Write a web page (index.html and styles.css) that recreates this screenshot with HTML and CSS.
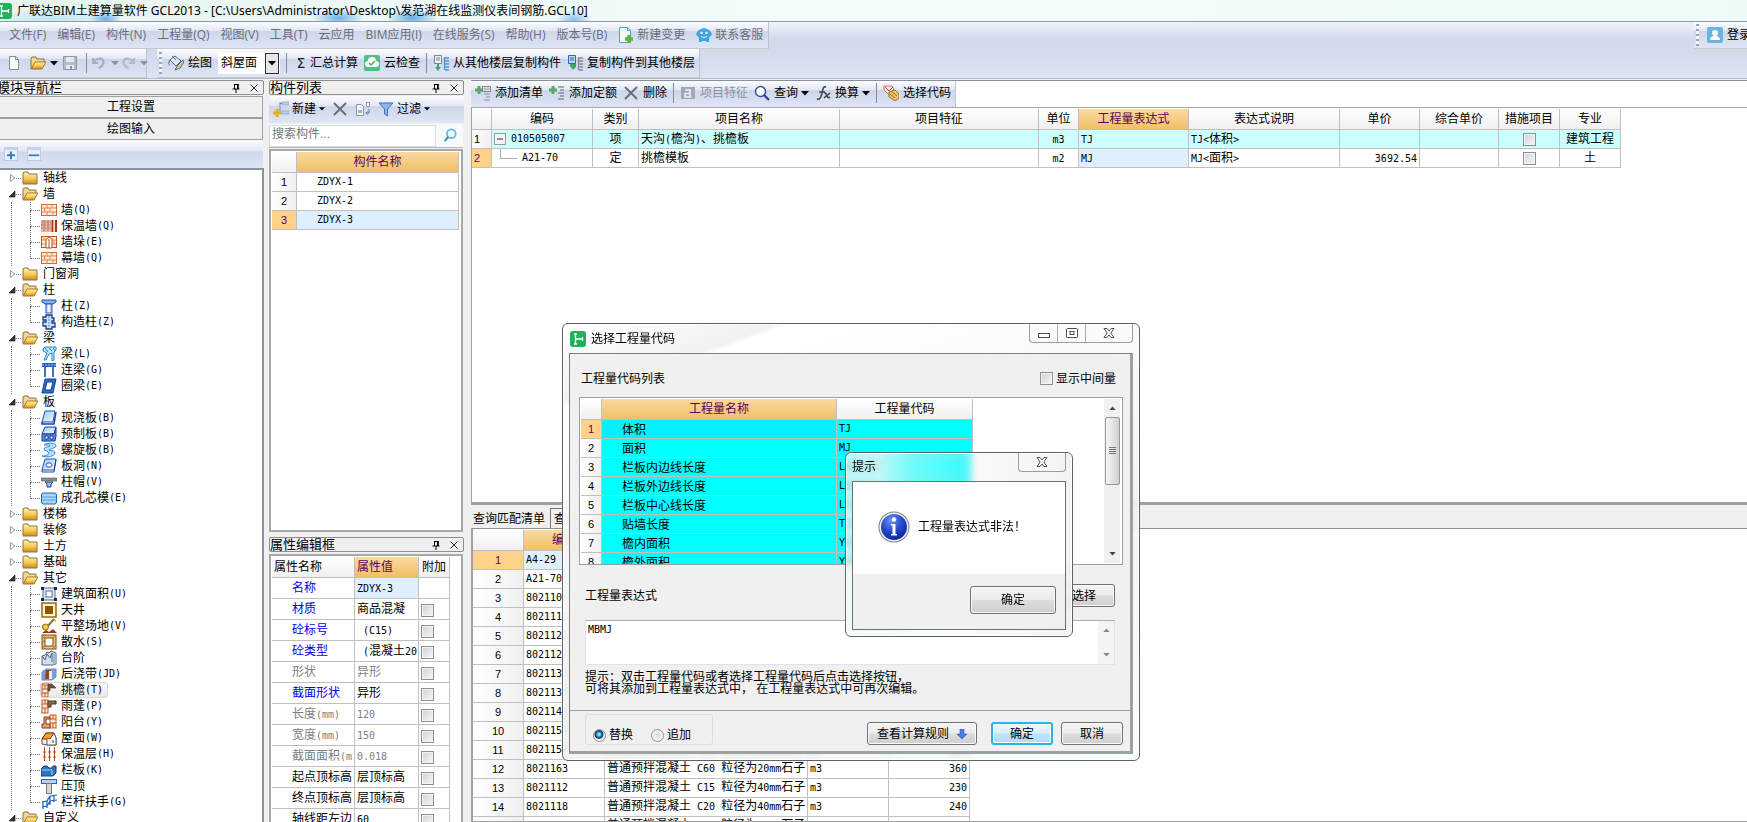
FILE: index.html
```html
<!DOCTYPE html>
<html lang="zh-CN">
<head>
<meta charset="utf-8">
<title>广联达BIM土建算量软件 GCL2013</title>
<link rel="stylesheet" href="styles.css">
</head>
<body>
<svg class="sprite" aria-hidden="true">
<defs>
<linearGradient id="gold" x1="0" y1="0" x2="0" y2="1"><stop offset="0" stop-color="#fff3b0"/><stop offset=".5" stop-color="#f6cf5e"/><stop offset="1" stop-color="#d08a18"/></linearGradient>
<linearGradient id="sky" x1="0" y1="0" x2="1" y2="1"><stop offset="0" stop-color="#9fc8f5"/><stop offset="1" stop-color="#f4faff"/></linearGradient>
<linearGradient id="steel" x1="0" y1="0" x2="1" y2="0"><stop offset="0" stop-color="#9db8e6"/><stop offset=".5" stop-color="#fff"/><stop offset="1" stop-color="#7d9fdd"/></linearGradient>
<radialGradient id="orb" cx=".4" cy=".25" r=".8"><stop offset="0" stop-color="#6f93ee"/><stop offset=".5" stop-color="#2a4bd0"/><stop offset="1" stop-color="#0a1f9c"/></radialGradient>
</defs>
<symbol id="app" viewBox="0 0 16 16"><rect width="16" height="16" rx="3" fill="#21b15c"/><path d="M4 3h3M5.500 3v10M4 13h3M5.500 8h7M12.500 6v4" stroke="#fff" stroke-width="1.300" fill="none"/></symbol>
<symbol id="folder" viewBox="0 0 16 14"><path d="M1 3V2l1-1h4l1 2h8v10H1z" fill="url(#gold)" stroke="#8a7346"/></symbol>
<symbol id="folder-open" viewBox="0 0 16 14"><path d="M1 13V2l1-1h4l1 2h7v3" fill="#f3d88a" stroke="#8a7346"/><path d="M1 13l4-7h11l-4 7z" fill="url(#gold)" stroke="#a37b2c"/></symbol>
<symbol id="shut" viewBox="0 0 8 10"><path d="M2.500 1.500v7L7 5z" fill="#fff" stroke="#999"/></symbol>
<symbol id="unfold" viewBox="0 0 8 10"><path d="M7 2v6H1z" fill="#333" stroke="#111" stroke-width=".6"/></symbol>
<symbol id="wall" viewBox="0 0 16 14"><rect x=".5" y="1.500" width="15" height="11" fill="#fdebd9" stroke="#cc6f3c"/><path d="M1 5h14M1 9h14M6 1v4M11 1v4M3.500 5v4M9 5v4M6 9v4M12 9v4" stroke="#d98a52" fill="none"/></symbol>
<symbol id="wall-ins" viewBox="0 0 16 14"><rect y="1" width="10" height="12" fill="#e9b3a4"/><path d="M0 3h10M0 6h10M0 9h10M3 1v12M7 1v12" stroke="#b86a5b" stroke-dasharray="2 1"/><path d="M11.500 1v12M15 1v12" stroke="#a8321a" stroke-width="2"/><path d="M13 1v12" stroke="#f3c27c"/></symbol>
<symbol id="pier" viewBox="0 0 16 14"><rect x=".5" y="1.500" width="15" height="11" fill="#fdebd9" stroke="#c0561f"/><path d="M1 5h4M1 9h4M11 5h4M11 9h4M3 1v4M13 5v4" stroke="#d98a52"/><path d="M5 13V4l3-2 3 2v9z" fill="#fff" stroke="#b5501e"/><path d="M8 4v9" stroke="#b5501e"/></symbol>
<symbol id="column" viewBox="0 0 16 16"><path d="M1 2h14v2l-3 2H4L1 4z" fill="#7fb1ee" stroke="#1d4fb0"/><rect x="5" y="6" width="6" height="9" fill="url(#steel)" stroke="#2a5cc0"/></symbol>
<symbol id="ccolumn" viewBox="0 0 16 16"><path d="M5 1h6v3h2v3h-2v2h3v4h-3v2H5v-3H2V8h3V6H2V3h3z" fill="#cfe0f7" stroke="#163f8e" stroke-width="1.300"/><path d="M8 2v12" stroke="#5d8bd0" stroke-dasharray="2 1"/></symbol>
<symbol id="beam" viewBox="0 0 16 16"><path d="M2 3l2-2h11v3L13 6v8l-2 1V7l-3 1-3 6H3l3-7-4-2z" fill="#bfe2fb" stroke="#2b86d3"/><path d="M4 2l3 4M8 2l3 3M12 2l2 3" stroke="#2b86d3"/></symbol>
<symbol id="lbeam" viewBox="0 0 16 16"><rect x="1" y="1" width="14" height="4" fill="#2a5fb8"/><path d="M1 3h14" stroke="#9cc2f0" stroke-dasharray="2 1"/><path d="M4 5v10M12 5v10" stroke="#3d73c9" stroke-width="2"/></symbol>
<symbol id="rbeam" viewBox="0 0 16 16"><path d="M4 1h11l-3 14H1z" fill="#2f6fd0" stroke="#123c94"/><path d="M6 4h6l-2 8H4z" fill="#fff" stroke="#123c94"/></symbol>
<symbol id="slab" viewBox="0 0 16 16"><path d="M4 1h10l-2 11H1z" fill="url(#sky)" stroke="#1d55b5"/><path d="M1 12v2h12l2-12" fill="none" stroke="#1546a0" stroke-width="1.500"/></symbol>
<symbol id="preslab" viewBox="0 0 16 16"><path d="M4 1h11l-2 7H1z" fill="url(#sky)" stroke="#1d3f9c"/><path d="M1 8h12l2-6v8l-1 5H1z" fill="#5a8ce0" stroke="#163a94"/><path d="M4 10h3v3H4zM9 10h3v3H9z" fill="#fff" stroke="#163a94"/></symbol>
<symbol id="spiral" viewBox="0 0 16 16"><path d="M3 3C8 0 15 1 15 4c0 2-7 3-7 4s6 0 6 3-8 5-13 3c3 0 7-1 7-3S3 9 3 7s5-2 6-3-3-1-6-1z" fill="#b9e0fb" stroke="#2c8ad6"/></symbol>
<symbol id="hole" viewBox="0 0 16 16"><path d="M4 1h11l-2 11H1z" fill="url(#sky)" stroke="#1d55b5"/><path d="M1 12v2h12l2-12" fill="none" stroke="#1546a0"/><ellipse cx="8" cy="7" rx="3" ry="2.200" fill="#fff" stroke="#1d55b5"/></symbol>
<symbol id="cap" viewBox="0 0 16 16"><rect y="4" width="16" height="3" fill="#8d8d8d" stroke="#555" stroke-width=".6"/><path d="M4 8h8l-2 2v3H6v-3z" fill="#9fbdf0" stroke="#163a94"/></symbol>
<symbol id="core" viewBox="0 0 16 16"><rect x=".5" y="3" width="15" height="11" rx="2" fill="#a7d3f5" stroke="#2a62a8"/><path d="M1 7h14M1 10h14" stroke="#5fa4dc"/></symbol>
<symbol id="area" viewBox="0 0 16 16"><rect x="2" y="2" width="12" height="12" fill="#dbe4f2" stroke="#5a6f94"/><rect x="5" y="5" width="6" height="6" fill="#fff" stroke="#5a6f94"/><path d="M0 1h3v3H0zM13 1h3v3h-3zM0 12h3v3H0zM13 12h3v3h-3z" fill="#152a55"/></symbol>
<symbol id="well" viewBox="0 0 16 16"><rect x="1" y="1" width="14" height="14" fill="#fff3d2" stroke="#9a6a11" stroke-width="1.500"/><rect x="4" y="4" width="8" height="8" fill="#8b5a08"/></symbol>
<symbol id="shovel" viewBox="0 0 16 16"><path d="M13 1L6 9" stroke="#8a7a35" stroke-width="2"/><path d="M12 1l3 2" stroke="#8a7a35"/><circle cx="4.500" cy="9" r="3" fill="#f6cf3a" stroke="#8a6a12"/><path d="M1 15l4-3 3 2 4-3 4 4z" fill="#8a3b18"/></symbol>
<symbol id="apron" viewBox="0 0 16 16"><rect x="1" y="1" width="14" height="14" fill="#edc37c" stroke="#7d4c13"/><path d="M1 5l4-4M1 9l3-3M12 4l3-3M1 14l4-3M11 15l4-4" stroke="#a86f27"/><rect x="4" y="4" width="8" height="8" fill="#fff" stroke="#7d4c13"/></symbol>
<symbol id="steps" viewBox="0 0 16 16"><path d="M1 6l3-1 2-3 2 1 2-2 5 2v11l-3 1H1z" fill="#d3deea" stroke="#4b6685"/><path d="M1 6l3 4 2-6 3 4 2-5v9" fill="none" stroke="#4b6685"/><path d="M12 4l3-1v11l-3 1z" fill="#9bb4d0"/></symbol>
<symbol id="strip" viewBox="0 0 16 16"><path d="M1 6l4-3h10v8l-4 3H1z" fill="#7b9cd6" stroke="#6f8bbd"/><path d="M5 4h5v9H4z" fill="#9a4319"/><path d="M8 5h3v8H8z" fill="#e7eefb"/></symbol>
<symbol id="eave" viewBox="0 0 16 16"><rect x="1" y="3" width="6" height="12" fill="#fdebd9" stroke="#c0561f"/><path d="M1 7h6M1 11h6M4 3v4M4 11v4" stroke="#c0561f"/><path d="M7 2h4l4 4H9v3H7z" fill="#6f5138" stroke="#4a321e" stroke-width=".6"/><path d="M1 3l1-2h6" stroke="#c0561f" fill="none"/></symbol>
<symbol id="canopy" viewBox="0 0 16 16"><rect x="1" y="2" width="6" height="13" fill="#fdebd9" stroke="#c0561f"/><path d="M1 6h6M1 10h6M4 2v4M4 10v5" stroke="#c0561f"/><path d="M7 3h8v3h-5v3H7z" fill="#8c6b4c" stroke="#4a321e"/></symbol>
<symbol id="balcony" viewBox="0 0 16 16"><rect x="9" y="1" width="6" height="13" fill="#fdebd9" stroke="#c0561f"/><path d="M9 5h6M9 9h6M12 1v4M12 9v5" stroke="#c0561f"/><path d="M3 3h6v2H5v5h4v4H1v-4h2z" fill="#dca277" stroke="#8c3f16"/></symbol>
<symbol id="roof" viewBox="0 0 16 16"><path d="M1 9l4-6h8l2 5v7H6L1 14z" fill="#efefef" stroke="#555"/><path d="M1 9l4-6h8l-4 6z" fill="#f59e22" stroke="#70400c"/><path d="M9 9l4-6 2 5v7H6v-6" fill="#fff" stroke="#555"/><path d="M12 10v3" stroke="#333"/></symbol>
<symbol id="insul" viewBox="0 0 16 16"><path d="M3.500 1v14M8.500 1v14M13.500 1v14M2 6h3M2 11h3M7 6h3M7 11h3M12 6h3M12 11h3" stroke="#c2481b" fill="none"/></symbol>
<symbol id="board" viewBox="0 0 16 16"><path d="M0 7l3-3h3l2 2h3l1-2h3v7l-3 3H0z" fill="#2d75c0" stroke="#12407c"/><path d="M1 8h10v5" stroke="#a9d1f4" fill="none"/></symbol>
<symbol id="coping" viewBox="0 0 16 16"><rect x=".5" y="1.500" width="15" height="4" fill="#b3d4f6" stroke="#2a62c0"/><rect x="5.500" y="5.500" width="5" height="10" fill="#d7d7d7" stroke="#777"/></symbol>
<symbol id="rail" viewBox="0 0 16 16"><path d="M1 8l5-1 3-5 7-1M1 13l5-1 3-5 7-1M2 7v8M6 6v8M9 2v9M13 1v7" stroke="#1f62bf" stroke-width="1.200" fill="none"/></symbol>
<symbol id="new" viewBox="0 0 16 16"><path d="M3.500 1.500h6l3 3v10h-9z" fill="#fdfeff" stroke="#7c8ba8"/><path d="M9.500 1.500v3h3" fill="none" stroke="#7c8ba8"/></symbol>
<symbol id="save" viewBox="0 0 16 16"><path d="M1.500 1.500h13v13h-13z" fill="#b5bac6" stroke="#9298a8"/><path d="M4 2h8v5H4zM4 10h8v4H4z" fill="#e6e9f1"/><path d="M9 11v3" stroke="#9298a8" stroke-width="2"/></symbol>
<symbol id="undo" viewBox="0 0 16 16"><path d="M2 3v5h5M2.500 7.500C5 3 12 2 12.500 7c0 3-2 5-5 6" fill="none" stroke="#a9aec0" stroke-width="2.200"/></symbol>
<symbol id="redo" viewBox="0 0 16 16"><path d="M14 3v5H9M13.500 7.500C11 3 4 2 3.500 7c0 3 2 5 5 6" fill="none" stroke="#b4b9ca" stroke-width="2.200"/></symbol>
<symbol id="caret" viewBox="0 0 8 5"><path d="M0 0h8L4 4.500z" fill="currentColor"/></symbol>
<symbol id="paint" viewBox="0 0 16 16"><path d="M2 5l5-4 6 5-5 5z" fill="#dfe8f6" stroke="#4f678f"/><path d="M2 5c-2 3-1 5 0 5M4 1l4 4" stroke="#4f678f" fill="none"/><path d="M15 5l-6 6-2 4 5-2 4-6z" fill="#f0c868" stroke="#3c6fb4"/></symbol>
<symbol id="cloud" viewBox="0 0 16 16"><rect width="16" height="16" rx="2" fill="#4fbf85"/><path d="M4 12a3 3 0 010-6 4 4 0 018 0 3 3 0 010 6z" fill="#fff"/><path d="M5 8l2 2 4-4" stroke="#35b26c" stroke-width="1.500" fill="none"/></symbol>
<symbol id="copyfrom" viewBox="0 0 16 16"><path d="M1.500.5h7v8h-7z" fill="#eef1f6" stroke="#7b8594"/><path d="M3 3h4M3 5h4" stroke="#7b8594"/><path d="M4 9v3H2l3 4 3-4H6V9z" fill="#3fa567"/><path d="M11.500 2v13M12 3h4M12 6h4M12 9h4M12 12h4M12 15h4" fill="none" stroke="#4f93d6" stroke-width="1.300"/></symbol>
<symbol id="copyto" viewBox="0 0 16 16"><path d="M1.500.5h7v8h-7z" fill="#b8d4f5" stroke="#2f66b3"/><path d="M3 3h4M3 5h4" stroke="#2f66b3"/><path d="M3 9v2l3 4 3-3V9z" fill="#3fa567"/><path d="M11.500 2v13M12 3h4M12 6h4M12 9h4M12 12h4M12 15h4" fill="none" stroke="#858c98" stroke-width="1.300"/></symbol>
<symbol id="addlist" viewBox="0 0 16 16"><path d="M4 1v8M0 5h8" stroke="#5fa566" stroke-width="3"/><rect x="7.500" y="1.500" width="8" height="5" fill="#eef1f6" stroke="#808895"/><path d="M8 4h7M10 2v4M13 2v4" stroke="#9aa1ad" stroke-width=".8"/><path d="M9 9h6M11 12h4M9 15h6" stroke="#8a909b"/></symbol>
<symbol id="addquota" viewBox="0 0 16 16"><path d="M4 1v8M0 5h8" stroke="#5fa566" stroke-width="3"/><path d="M9 2h6M11 5h4M9 8h6M11 11h4M9 14h6" stroke="#60656e"/></symbol>
<symbol id="del" viewBox="0 0 16 16"><path d="M2 2l12 12M14 2L2 14" stroke="#6b6b70" stroke-width="1.800"/></symbol>
<symbol id="feat" viewBox="0 0 16 16"><rect x="1" y="2" width="14" height="12" fill="#a2a8b5"/><path d="M5 5h5v7H5V8.500h5M10 12h1.500" fill="none" stroke="#eef0f5" stroke-width="1.600"/></symbol>
<symbol id="search" viewBox="0 0 16 16"><circle cx="6.500" cy="6.500" r="5" fill="#fff" stroke="#3a4fa0" stroke-width="1.500"/><path d="M10 10l5 5" stroke="#2d3d90" stroke-width="2.200"/></symbol>
<symbol id="lens" viewBox="0 0 16 16"><circle cx="9.500" cy="6.500" r="5" fill="#eff8ff" stroke="#69b5ea" stroke-width="2"/><path d="M6 10l-4 5" stroke="#3d8fd2" stroke-width="2.400"/></symbol>
<symbol id="fx" viewBox="0 0 16 16"><path d="M11 2c-3-1-3 2-4 6s-2 7-5 6M4 7h6M9 8c2-1 2 1 3 3s2 2 3 1M15 8l-6 5" stroke="#42464f" stroke-width="1.600" fill="none"/></symbol>
<symbol id="pick" viewBox="0 0 16 16"><path d="M1 1h8l2 3-5 6-5-5z" fill="#f3e3dd" stroke="#c47b67"/><path d="M2 2l4 4 4-4" stroke="#cf4935" fill="none"/><path d="M6 7l6-2 4 4v4l-4 3-6-4z" fill="#eac069" stroke="#a0752c"/><path d="M7 9l5 4M9 7l5 4" stroke="#a0752c"/></symbol>
<symbol id="newchange" viewBox="0 0 16 16"><path d="M1.500.5h8l3 3v12h-11z" fill="#f3faff" stroke="#4fa3d5"/><path d="M9.500.5v3h3" fill="none" stroke="#4fa3d5"/><path d="M11 8v8M7 12h8" stroke="#62b040" stroke-width="3.400"/></symbol>
<symbol id="robot" viewBox="0 0 16 16"><path d="M3 3l2-1 3-1 3 1 2 1 2 2 1 3-2 1-1 3v3h-2l-1-1H6l-1 1H3v-3L2 9 0 8l1-3z" fill="#3fa5e2"/><circle cx="5.500" cy="6" r="1.200" fill="#fff"/><circle cx="10.500" cy="6" r="1.200" fill="#fff"/><path d="M5 9c2 2 4 2 6 0" stroke="#fff" fill="none"/></symbol>
<symbol id="user" viewBox="0 0 16 16"><rect width="16" height="16" rx="2" fill="#6db4d9"/><circle cx="8" cy="6" r="3" fill="#fff"/><path d="M3 13c0-3 2-4 5-4s5 1 5 4z" fill="#fff"/></symbol>
<symbol id="addcomp" viewBox="0 0 16 16"><path d="M7 1v12M7 2.500h9M7 12.500h9" stroke="#6c89b4"/><path d="M9 1h7v3H9zM9 10h7v3H9z" fill="#b9cdea" stroke="#8099bd" stroke-width=".6"/><path d="M4 8v8M0 12h8" stroke="#e2b31d" stroke-width="3"/></symbol>
<symbol id="copy" viewBox="0 0 16 16"><path d="M1.500 3.500h5l2 2v9h-7z" fill="#f4f6fb" stroke="#8d94a3"/><path d="M3 9h4v3H3z" fill="#a8adb9"/><path d="M11.500 1.500h3v4h-3z" fill="#fff" stroke="#8d94a3"/><path d="M14 8v4h-3M12.500 10.500L11 12l1.500 1.500" stroke="#4b74d0" fill="none"/></symbol>
<symbol id="filter" viewBox="0 0 16 16"><path d="M1 2h14L9.500 8v7l-3-2V8z" fill="#8db5ec" stroke="#3c6fc4"/></symbol>
<symbol id="plus" viewBox="0 0 16 16"><rect x=".5" y=".5" width="15" height="15" fill="#e9f0fb" stroke="#b9c6e0"/><path d="M0 2h16" stroke="#c5d3ee" stroke-width="3"/><path d="M8 5v9M3.500 9.500h9" stroke="#2f7dbb" stroke-width="2.200"/></symbol>
<symbol id="minus" viewBox="0 0 16 16"><rect x=".5" y=".5" width="15" height="15" fill="#e9f0fb" stroke="#b9c6e0"/><path d="M0 2h16" stroke="#c5d3ee" stroke-width="3"/><path d="M2 9.500h12" stroke="#2f7dbb" stroke-width="2"/></symbol>
<symbol id="pin" viewBox="0 0 8 10"><path d="M2 1.500h4.500M2.500 1v5M5.500 1v5M6.300 1v5M.5 6h7M4 6v4" stroke="#000" fill="none"/></symbol>
<symbol id="close" viewBox="0 0 8 8"><path d="M.5.5l7 7M7.500.5l-7 7" stroke="#222"/></symbol>
<symbol id="wx" viewBox="0 0 12 10"><path d="M1 .5h3l2 2.500L8 .5h3L7.800 5 11 9.500H8L6 7 4 9.500H1L4.200 5z" fill="#fff" stroke="#4a4f5c"/></symbol>
<symbol id="wmin" viewBox="0 0 12 10"><rect x=".5" y="5.500" width="11" height="4" fill="#fff" stroke="#4a4f5c"/></symbol>
<symbol id="wmax" viewBox="0 0 12 10"><rect x=".5" y=".5" width="11" height="9" rx="1" fill="#fff" stroke="#4a4f5c"/><rect x="4" y="3.500" width="4" height="3" fill="#fff" stroke="#4a4f5c"/></symbol>
<symbol id="down" viewBox="0 0 10 10"><path d="M3 0h4v5h3L5 10 0 5h3z" fill="#4a7de0" stroke="#2a55b8" stroke-width=".6"/></symbol>
<symbol id="info" viewBox="0 0 32 32"><circle cx="16" cy="16" r="15.500" fill="#777d88"/><circle cx="16" cy="16" r="14.500" fill="#f1f3f6"/><circle cx="16" cy="16" r="13" fill="url(#orb)"/><circle cx="16" cy="8.500" r="2.200" fill="#fff"/><path d="M13 13h4.500v10H19v1.500h-6V23h1.500v-8.500H13z" fill="#fff"/></symbol>
<symbol id="box-minus" viewBox="0 0 12 12"><rect x=".5" y=".5" width="11" height="11" fill="#f2f2f2" stroke="#9a9a9a"/><path d="M3 6h6" stroke="#333"/></symbol>
</svg>

<header class="titlebar"><svg class="i16"><use href="#app"/></svg><h1>广联达BIM土建算量软件 GCL2013 - [C:\Users\Administrator\Desktop\发范湖在线监测仪表间钢筋.GCL10]</h1></header>

<div class="chrome">
<div class="menurow">
<nav class="menu bar">
<button>文件(F)</button><button>编辑(E)</button><button>构件(N)</button><button>工程量(Q)</button><button>视图(V)</button><button>工具(T)</button><button>云应用</button><button>BIM应用(I)</button><button>在线服务(S)</button><button>帮助(H)</button><button>版本号(B)</button><button><svg class="i16"><use href="#newchange"/></svg>新建变更</button><button><svg class="i16"><use href="#robot"/></svg>联系客服</button>
</nav>
<div class="login bar"><i class="grip"></i><button><svg class="i16"><use href="#user"/></svg>登录</button></div>
</div>
<div class="toolrow">
<div class="bar quick">
<button aria-label="新建"><svg class="i16"><use href="#new"/></svg></button>
<button aria-label="打开"><svg class="i16"><use href="#folder-open"/></svg><svg class="car"><use href="#caret"/></svg></button>
<button aria-label="保存"><svg class="i16"><use href="#save"/></svg></button>
<i class="sep"></i>
<button class="off" aria-label="撤销"><svg class="i16"><use href="#undo"/></svg><svg class="car"><use href="#caret"/></svg></button>
<button class="off" aria-label="重做"><svg class="i16"><use href="#redo"/></svg><svg class="car"><use href="#caret"/></svg></button>
</div>
<div class="bar tools"><i class="grip"></i>
<button><svg class="i16"><use href="#paint"/></svg>绘图</button>
<span class="combo"><select aria-label="构件类型"><option>斜屋面</option></select><svg class="car"><use href="#caret"/></svg></span>
<i class="sep"></i>
<button><b class="sigma">Σ</b>汇总计算</button>
<button><svg class="i16"><use href="#cloud"/></svg>云检查</button>
<i class="sep"></i>
<button><svg class="i16"><use href="#copyfrom"/></svg>从其他楼层复制构件</button>
<button><svg class="i16"><use href="#copyto"/></svg>复制构件到其他楼层</button>
</div>
</div>
</div>

<main class="work">
<aside class="navpane">
<div class="cap cut"><h2>模块导航栏</h2><button aria-label="固定"><svg class="pin"><use href="#pin"/></svg></button><button aria-label="关闭"><svg class="x8"><use href="#close"/></svg></button></div>
<button class="wide">工程设置</button>
<button class="wide">绘图输入</button>
<div class="treebar"><button aria-label="展开"><svg class="i14"><use href="#plus"/></svg></button><button aria-label="折叠"><svg class="i14"><use href="#minus"/></svg></button></div>
<ul class="tree">
<li><div class="row"><svg class="tw"><use href="#shut"/></svg><i class="dot"></i><svg class="fo"><use href="#folder"/></svg>轴线</div></li>
<li><div class="row"><svg class="tw"><use href="#unfold"/></svg><i class="dot"></i><svg class="fo"><use href="#folder-open"/></svg>墙</div>
<ul><li><i class="tee"></i><span class="leaf"><svg class="ic"><use href="#wall"/></svg>墙<span class="l">(Q)</span></span></li>
<li><i class="tee"></i><span class="leaf"><svg class="ic"><use href="#wall-ins"/></svg>保温墙<span class="l">(Q)</span></span></li>
<li><i class="tee"></i><span class="leaf"><svg class="ic"><use href="#pier"/></svg>墙垛<span class="l">(E)</span></span></li>
<li><i class="tee"></i><span class="leaf"><svg class="ic"><use href="#wall"/></svg>幕墙<span class="l">(Q)</span></span></li></ul></li>
<li><div class="row"><svg class="tw"><use href="#shut"/></svg><i class="dot"></i><svg class="fo"><use href="#folder"/></svg>门窗洞</div></li>
<li><div class="row"><svg class="tw"><use href="#unfold"/></svg><i class="dot"></i><svg class="fo"><use href="#folder-open"/></svg>柱</div>
<ul><li><i class="tee"></i><span class="leaf"><svg class="ic"><use href="#column"/></svg>柱<span class="l">(Z)</span></span></li>
<li><i class="tee"></i><span class="leaf"><svg class="ic"><use href="#ccolumn"/></svg>构造柱<span class="l">(Z)</span></span></li></ul></li>
<li><div class="row"><svg class="tw"><use href="#unfold"/></svg><i class="dot"></i><svg class="fo"><use href="#folder-open"/></svg>梁</div>
<ul><li><i class="tee"></i><span class="leaf"><svg class="ic"><use href="#beam"/></svg>梁<span class="l">(L)</span></span></li>
<li><i class="tee"></i><span class="leaf"><svg class="ic"><use href="#lbeam"/></svg>连梁<span class="l">(G)</span></span></li>
<li><i class="tee"></i><span class="leaf"><svg class="ic"><use href="#rbeam"/></svg>圈梁<span class="l">(E)</span></span></li></ul></li>
<li><div class="row"><svg class="tw"><use href="#unfold"/></svg><i class="dot"></i><svg class="fo"><use href="#folder-open"/></svg>板</div>
<ul><li><i class="tee"></i><span class="leaf"><svg class="ic"><use href="#slab"/></svg>现浇板<span class="l">(B)</span></span></li>
<li><i class="tee"></i><span class="leaf"><svg class="ic"><use href="#preslab"/></svg>预制板<span class="l">(B)</span></span></li>
<li><i class="tee"></i><span class="leaf"><svg class="ic"><use href="#spiral"/></svg>螺旋板<span class="l">(B)</span></span></li>
<li><i class="tee"></i><span class="leaf"><svg class="ic"><use href="#hole"/></svg>板洞<span class="l">(N)</span></span></li>
<li><i class="tee"></i><span class="leaf"><svg class="ic"><use href="#cap"/></svg>柱帽<span class="l">(V)</span></span></li>
<li><i class="tee"></i><span class="leaf"><svg class="ic"><use href="#core"/></svg>成孔芯模<span class="l">(E)</span></span></li></ul></li>
<li><div class="row"><svg class="tw"><use href="#shut"/></svg><i class="dot"></i><svg class="fo"><use href="#folder"/></svg>楼梯</div></li>
<li><div class="row"><svg class="tw"><use href="#shut"/></svg><i class="dot"></i><svg class="fo"><use href="#folder"/></svg>装修</div></li>
<li><div class="row"><svg class="tw"><use href="#shut"/></svg><i class="dot"></i><svg class="fo"><use href="#folder"/></svg>土方</div></li>
<li><div class="row"><svg class="tw"><use href="#shut"/></svg><i class="dot"></i><svg class="fo"><use href="#folder"/></svg>基础</div></li>
<li><div class="row"><svg class="tw"><use href="#unfold"/></svg><i class="dot"></i><svg class="fo"><use href="#folder-open"/></svg>其它</div>
<ul><li><i class="tee"></i><span class="leaf"><svg class="ic"><use href="#area"/></svg>建筑面积<span class="l">(U)</span></span></li>
<li><i class="tee"></i><span class="leaf"><svg class="ic"><use href="#well"/></svg>天井</span></li>
<li><i class="tee"></i><span class="leaf"><svg class="ic"><use href="#shovel"/></svg>平整场地<span class="l">(V)</span></span></li>
<li><i class="tee"></i><span class="leaf"><svg class="ic"><use href="#apron"/></svg>散水<span class="l">(S)</span></span></li>
<li><i class="tee"></i><span class="leaf"><svg class="ic"><use href="#steps"/></svg>台阶</span></li>
<li><i class="tee"></i><span class="leaf"><svg class="ic"><use href="#strip"/></svg>后浇带<span class="l">(JD)</span></span></li>
<li><i class="tee"></i><span class="leaf on"><svg class="ic"><use href="#eave"/></svg>挑檐<span class="l">(T)</span></span></li>
<li><i class="tee"></i><span class="leaf"><svg class="ic"><use href="#canopy"/></svg>雨蓬<span class="l">(P)</span></span></li>
<li><i class="tee"></i><span class="leaf"><svg class="ic"><use href="#balcony"/></svg>阳台<span class="l">(Y)</span></span></li>
<li><i class="tee"></i><span class="leaf"><svg class="ic"><use href="#roof"/></svg>屋面<span class="l">(W)</span></span></li>
<li><i class="tee"></i><span class="leaf"><svg class="ic"><use href="#insul"/></svg>保温层<span class="l">(H)</span></span></li>
<li><i class="tee"></i><span class="leaf"><svg class="ic"><use href="#board"/></svg>栏板<span class="l">(K)</span></span></li>
<li><i class="tee"></i><span class="leaf"><svg class="ic"><use href="#coping"/></svg>压顶</span></li>
<li><i class="tee"></i><span class="leaf"><svg class="ic"><use href="#rail"/></svg>栏杆扶手<span class="l">(G)</span></span></li></ul></li>
<li><div class="row"><svg class="tw"><use href="#unfold"/></svg><i class="dot"></i><svg class="fo"><use href="#folder-open"/></svg>自定义</div></li>
</ul>
</aside>

<div class="midpane">
<section class="stack">
<div class="cap"><h2>构件列表</h2><button aria-label="固定"><svg class="pin"><use href="#pin"/></svg></button><button aria-label="关闭"><svg class="x8"><use href="#close"/></svg></button></div>
<div class="compbar"><button><svg class="i16"><use href="#addcomp"/></svg>新建<svg class="car sm"><use href="#caret"/></svg></button><button aria-label="删除"><svg class="i16"><use href="#del"/></svg></button><button aria-label="复制"><svg class="i16"><use href="#copy"/></svg></button><button><svg class="i16"><use href="#filter"/></svg>过滤<svg class="car sm"><use href="#caret"/></svg></button></div>
<div class="find"><input type="text" placeholder="搜索构件..." aria-label="搜索构件"><button aria-label="搜索"><svg class="i14"><use href="#lens"/></svg></button></div>
<div class="box">
<table class="grid comps"><thead><tr><th></th><th class="hot">构件名称</th></tr></thead>
<tbody><tr><th>1</th><td>ZDYX-1</td></tr><tr><th>2</th><td>ZDYX-2</td></tr><tr class="cur"><th>3</th><td>ZDYX-3</td></tr></tbody></table>
</div>
</section>
<section class="stack">
<div class="cap"><h2>属性编辑框</h2><button aria-label="固定"><svg class="pin"><use href="#pin"/></svg></button><button aria-label="关闭"><svg class="x8"><use href="#close"/></svg></button></div>
<div class="box open">
<table class="grid props"><thead><tr><th>属性名称</th><th class="hot">属性值</th><th>附加</th></tr></thead>
<tbody>
<tr class="blue"><td>名称</td><td class="sel"><span class="l">ZDYX-3</span></td><td></td></tr>
<tr class="blue"><td>材质</td><td>商品混凝</td><td><input type="checkbox" aria-label="材质附加"></td></tr>
<tr class="blue"><td>砼标号</td><td><span class="l"> (C15)</span></td><td><input type="checkbox" aria-label="砼标号附加"></td></tr>
<tr class="blue"><td>砼类型</td><td><span class="l"> (</span>混凝土<span class="l">20</span></td><td><input type="checkbox" aria-label="砼类型附加"></td></tr>
<tr class="dim"><td>形状</td><td>异形</td><td><input type="checkbox" aria-label="形状附加"></td></tr>
<tr class="blue"><td>截面形状</td><td>异形</td><td><input type="checkbox" aria-label="截面形状附加"></td></tr>
<tr class="dim"><td>长度<span class="l">(mm)</span></td><td><span class="l">120</span></td><td><input type="checkbox" aria-label="长度附加"></td></tr>
<tr class="dim"><td>宽度<span class="l">(mm)</span></td><td><span class="l">150</span></td><td><input type="checkbox" aria-label="宽度附加"></td></tr>
<tr class="dim"><td>截面面积<span class="l">(m</span></td><td><span class="l">0.018</span></td><td><input type="checkbox" aria-label="截面面积附加"></td></tr>
<tr><td>起点顶标高</td><td>层顶标高</td><td><input type="checkbox" aria-label="起点顶标高附加"></td></tr>
<tr><td>终点顶标高</td><td>层顶标高</td><td><input type="checkbox" aria-label="终点顶标高附加"></td></tr>
<tr><td>轴线距左边</td><td><span class="l">60</span></td><td><input type="checkbox" aria-label="轴线距左边附加"></td></tr>
</tbody></table>
</div>
</section>
</div>

<div class="mainpane">
<section class="upper">
<div class="qtybar">
<div class="bar">
<button><svg class="i16"><use href="#addlist"/></svg>添加清单</button>
<button><svg class="i16"><use href="#addquota"/></svg>添加定额</button>
<button><svg class="i16"><use href="#del"/></svg>删除</button>
<i class="sep"></i>
<button class="off"><svg class="i16"><use href="#feat"/></svg>项目特征</button>
<button><svg class="i16"><use href="#search"/></svg>查询<svg class="car"><use href="#caret"/></svg></button>
<button><svg class="i16"><use href="#fx"/></svg>换算<svg class="car"><use href="#caret"/></svg></button>
<i class="sep"></i>
<button><svg class="i16"><use href="#pick"/></svg>选择代码</button>
</div></div>
<div class="sheet">
<table class="grid items">
<thead><tr><th></th><th>编码</th><th>类别</th><th>项目名称</th><th>项目特征</th><th>单位</th><th class="hot">工程量表达式</th><th>表达式说明</th><th>单价</th><th>综合单价</th><th>措施项目</th><th>专业</th></tr></thead>
<tbody>
<tr class="aqua"><th>1</th><td><span class="code"><svg class="i12"><use href="#box-minus"/></svg><span class="l">010505007</span></span></td><td class="c">项</td><td>天沟<span class="l">(</span>檐沟<span class="l">)</span>、挑檐板</td><td></td><td class="c"><span class="l">m3</span></td><td><span class="l">TJ</span></td><td><span class="l">TJ&lt;</span>体积<span class="l">&gt;</span></td><td></td><td></td><td class="c"><input type="checkbox" aria-label="措施项目 1"></td><td class="c">建筑工程</td></tr>
<tr class="cur2"><th>2</th><td><span class="code"><i class="elbow"></i><span class="l">A21-70</span></span></td><td class="c">定</td><td>挑檐模板</td><td></td><td class="c"><span class="l">m2</span></td><td class="sel"><span class="l">MJ</span></td><td><span class="l">MJ&lt;</span>面积<span class="l">&gt;</span></td><td class="r"><span class="l">3692.54</span></td><td></td><td class="c"><input type="checkbox" aria-label="措施项目 2"></td><td class="c">土</td></tr>
</tbody></table>
</div>
</section>
<section class="lower">
<div class="tabs"><button class="active">查询匹配清单</button><button>查询匹配定额</button></div>
<div class="sheet">
<table class="grid match">
<thead><tr><th></th><th class="hot">编码</th><th>名称</th><th>单位</th><th>单价</th></tr></thead>
<tbody>
<tr class="cur"><th>1</th><td>A4-29</td><td></td><td></td><td></td></tr>
<tr><th>2</th><td>A21-70</td><td></td><td></td><td></td></tr>
<tr><th>3</th><td>8021103</td><td></td><td></td><td></td></tr>
<tr><th>4</th><td>8021111</td><td></td><td></td><td></td></tr>
<tr><th>5</th><td>8021121</td><td></td><td></td><td></td></tr>
<tr><th>6</th><td>8021127</td><td></td><td></td><td></td></tr>
<tr><th>7</th><td>8021133</td><td></td><td></td><td></td></tr>
<tr><th>8</th><td>8021139</td><td></td><td></td><td></td></tr>
<tr><th>9</th><td>8021145</td><td></td><td></td><td></td></tr>
<tr><th>10</th><td>8021151</td><td></td><td></td><td></td></tr>
<tr><th>11</th><td>8021157</td><td><span class="zh">普通预拌混凝土</span> C55 <span class="zh">粒径为</span>20mm<span class="zh">石子</span></td><td>m3</td><td class="r">350</td></tr>
<tr><th>12</th><td>8021163</td><td><span class="zh">普通预拌混凝土</span> C60 <span class="zh">粒径为</span>20mm<span class="zh">石子</span></td><td>m3</td><td class="r">360</td></tr>
<tr><th>13</th><td>8021112</td><td><span class="zh">普通预拌混凝土</span> C15 <span class="zh">粒径为</span>40mm<span class="zh">石子</span></td><td>m3</td><td class="r">230</td></tr>
<tr><th>14</th><td>8021118</td><td><span class="zh">普通预拌混凝土</span> C20 <span class="zh">粒径为</span>40mm<span class="zh">石子</span></td><td>m3</td><td class="r">240</td></tr>
<tr><th>15</th><td>8021124</td><td><span class="zh">普通预拌混凝土</span> C25 <span class="zh">粒径为</span>40mm<span class="zh">石子</span></td><td>m3</td><td class="r">250</td></tr>
</tbody></table>
</div>
</section>
</div>
</main>

<div class="win dialog" role="dialog" aria-label="选择工程量代码">
<div class="wtitle"><svg class="i16"><use href="#app"/></svg><h2>选择工程量代码</h2><div class="wbtns"><button aria-label="最小化"><svg class="g"><use href="#wmin"/></svg></button><button aria-label="最大化"><svg class="g"><use href="#wmax"/></svg></button><button class="big" aria-label="关闭"><svg class="g"><use href="#wx"/></svg></button></div></div>
<form class="client">
<div class="body">
<div class="line head"><span>工程量代码列表</span><label><input type="checkbox">显示中间量</label></div>
<div class="codes">
<table class="grid codet"><thead><tr><th></th><th class="hot">工程量名称</th><th>工程量代码</th></tr></thead>
<tbody>
<tr class="cur"><th>1</th><td>体积</td><td>TJ</td></tr>
<tr><th>2</th><td>面积</td><td>MJ</td></tr>
<tr><th>3</th><td>栏板内边线长度</td><td>LBNBXCD</td></tr>
<tr><th>4</th><td>栏板外边线长度</td><td>LBWBXCD</td></tr>
<tr><th>5</th><td>栏板中心线长度</td><td>LBZXXCD</td></tr>
<tr><th>6</th><td>贴墙长度</td><td>TQCD</td></tr>
<tr><th>7</th><td>檐内面积</td><td>YNMJ</td></tr>
<tr><th>8</th><td>檐外面积</td><td>YWMJ</td></tr>
</tbody></table>
<div class="sbar"><svg class="ar"><use href="#caret"/></svg><i class="thumb"></i><i class="fill"></i><svg class="ar dn"><use href="#caret"/></svg></div>
</div>
<div class="line expr"><label for="ex">工程量表达式</label><button type="button" class="btn">选择</button></div>
<div class="area"><textarea id="ex">MBMJ</textarea><div class="sbar flat"><svg class="ar"><use href="#caret"/></svg><i class="fill"></i><svg class="ar dn"><use href="#caret"/></svg></div></div>
<p class="hint">提示：双击工程量代码或者选择工程量代码后点击选择按钮，<br>可将其添加到工程量表达式中， 在工程量表达式中可再次编辑。</p>
</div>
<div class="foot">
<fieldset><label><input type="radio" name="m" checked>替换</label><label><input type="radio" name="m">追加</label></fieldset>
<button type="button" class="btn rules">查看计算规则<svg class="i10"><use href="#down"/></svg></button>
<button type="button" class="btn main">确定</button>
<button type="button" class="btn">取消</button>
</div>
</form>
</div>

<div class="win msg" role="alertdialog" aria-label="提示">
<div class="wtitle"><h2>提示</h2><div class="wbtns"><button class="big" aria-label="关闭"><svg class="g"><use href="#wx"/></svg></button></div></div>
<div class="client">
<div class="say"><svg class="i32"><use href="#info"/></svg><p>工程量表达式非法！</p></div>
<div class="act"><button class="btn">确定</button></div>
</div>
</div>
</body>
</html>
```

FILE: styles.css
```css
* { box-sizing: border-box; }
html, body { height: 100%; }
body {
  margin: 0; display: flex; flex-direction: column; overflow: hidden; position: relative;
  background: #f0f0f0; color: #000;
  font: 12px/16px "Liberation Sans", "Noto Sans CJK SC", sans-serif;
}
h1, h2, p, ul, fieldset { margin: 0; padding: 0; }
h1, h2 { font-weight: 400; }
ul { list-style: none; }
button, input, select, textarea { font: inherit; color: inherit; }
button { background: none; border: 0; padding: 0; display: inline-flex; align-items: center; white-space: nowrap; }
svg { display: block; flex: none; }
.sprite { position: absolute; width: 0; height: 0; }
.i10 { width: 10px; height: 10px; }
.i12 { width: 12px; height: 12px; }
.i14 { width: 14px; height: 14px; }
.i16 { width: 16px; height: 16px; }
.i32 { width: 32px; height: 32px; }
.car { width: 8px; height: 5px; }
.car.sm { width: 6px; height: 4px; }
.l { font: 10px/16px "DejaVu Sans Mono", monospace; white-space: pre; }

/* title bar */
.titlebar {
  flex: none; height: 22px; display: flex; align-items: center; gap: 5px; padding-right: 8px; border-bottom: 1px solid #93979f;
  background:
    radial-gradient(ellipse 60px 10px at 52px 19px, #bfe6f5, transparent),
    radial-gradient(ellipse 16px 8px at 105px 19px, #5fa9e8, transparent),
    radial-gradient(ellipse 26px 10px at 338px 18px, #6fb4e6, transparent),
    radial-gradient(ellipse 26px 10px at 412px 18px, #62aee2, transparent),
    radial-gradient(ellipse 18px 10px at 574px 20px, #8dbcf0, transparent),
    linear-gradient(90deg, #e6f3ee, #eefaf8 30%, #f2fdfd 50%, #eefbfb);
}
.titlebar .i16 { margin-left: -4px; }
.titlebar h1 { font-family: "Noto Sans", "Noto Sans CJK SC", sans-serif; font-size: 12px; white-space: nowrap; }
.menu, .login { font-family: "Open Sans", "Noto Sans CJK SC", sans-serif; white-space: nowrap; }

/* menus and toolbars */
.chrome { flex: none; background: linear-gradient(#f0f3fb, #dbe1f1 12px, #d2daec 16px, #d2daec 30px, #dde4f4 56px); border-bottom: 1px solid #b4bbd0; }
.bar { display: flex; align-items: center; background: linear-gradient(#fbfcfe, #e2e7f5 34%, #ced6ea 36%, #dee5f5); border-right: 1px solid #c2c4cc; border-bottom: 1px solid #c9c9c9; }
.bar .i16 { margin-right: 4px; }
.menurow { display: flex; justify-content: space-between; height: 27px; }
.menu { gap: 11px; padding: 0 5px 0 9px; color: #6b6e78; }
.menu .i16 { margin-right: 3px; }
.login { padding-left: 2px; gap: 8px; border-right: 0; width: 107px; margin-right: -54px; }
.toolrow { display: flex; height: 29px; gap: 10px; }
.grip { width: 3px; height: 22px; flex: none; background: linear-gradient(#9aa3b8 50%, #f6f8fc 50%) 0 0 / 3px 5px; }
.sep { width: 1px; height: 20px; background: #85899a; flex: none; }
.quick { padding: 0 1px 0 6px; gap: 4px; }
.quick .off { margin-right: -3px; }
.off { color: #8e93a0; }
.tools { padding: 0 4px 0 2px; gap: 6px; }
.combo { display: flex; align-items: center; background: #fff; height: 21px; }
.combo select { appearance: none; border: 0; background: none; width: 47px; height: 20px; padding: 0 3px; line-height: 18px; }
.combo .car { box-sizing: content-box; padding: 7px 2px; border: 1px solid #333; background: #e8e8e8; margin-right: 1px; }
.sigma { font: 14px/16px "DejaVu Sans", sans-serif; width: 12px; margin: 0 3px 0 2px; color: #222; text-align: center; }

/* work area */
.work { flex: 1; min-height: 0; display: grid; grid-template-columns: 264px 195px minmax(0, 1fr); column-gap: 5px; padding-top: 1px; }
.cap { flex: none; display: flex; align-items: center; gap: 10px; height: 15px; border: 1px solid #8e8e8e; border-radius: 2px; padding-right: 5px; }
.cap h2 { flex: 1; font-size: 13px; line-height: 15px; white-space: nowrap; }
.cap.cut h2 { margin-left: -4px; }
.pin { width: 8px; height: 10px; }
.x8 { width: 8px; height: 8px; }
.navpane { display: flex; flex-direction: column; min-height: 0; }
.wide { flex: none; justify-content: center; height: 22px; border: 1px solid #a0a0a0; border-left: 0; background: #f0f0f0; margin-right: 1px; }
.cap + .wide { margin-top: 1px; }
.treebar { flex: none; display: flex; align-items: center; gap: 9px; height: 28px; padding-left: 4px; margin-right: 1px; background: linear-gradient(#fbfcfe, #e2e7f5 40%, #d0d8ec 42%, #dde4f4); }
.tree { flex: 1; min-height: 0; overflow: hidden; background: #fff; border: 2px solid #8b92a0; border-left: 0; border-bottom: 0; }
.row { display: flex; align-items: center; height: 16px; padding-left: 8px; white-space: nowrap; }
.tw { width: 8px; height: 10px; }
.dot { width: 5px; border-top: 1px dotted #888; margin-right: 1px; }
.fo { width: 16px; height: 14px; margin-right: 5px; }
.tree ul { margin-left: 11px; border-left: 1px dotted #777; }
.tree ul li { display: flex; height: 16px; padding-left: 18px; }
.tee { width: 10px; display: block; }
.tee::before, .tee::after { content: ""; display: block; height: 8px; border-left: 1px dotted #777; }
.tee::before { border-bottom: 1px dotted #777; }
li:last-child > .tee::after { border: 0; }
.leaf { display: flex; align-items: center; padding: 0 5px 0 1px; white-space: nowrap; height: 16px; }
.leaf.on { background: linear-gradient(#fafafa, #e8e8e8); outline: 1px solid #d9d9d9; outline-offset: -1px; border-radius: 3px; }
.ic { width: 16px; height: 16px; margin-right: 4px; }

/* grids */
.grid { border-collapse: separate; border-spacing: 0; table-layout: fixed; width: 0; line-height: 18px; }
.grid th, .grid td { border-right: 1px solid #c0c0c0; border-bottom: 1px solid #c0c0c0; padding: 0 2px; height: 19px; overflow: hidden; white-space: nowrap; font-weight: 400; text-align: left; }
.grid thead th { height: 21px; text-align: center; background: linear-gradient(#fff, #f0f0f0); }
.grid tbody th { text-align: center; background: linear-gradient(90deg, #fff, #f0f0f0); font: 11px/18px "Liberation Sans", sans-serif; }
.grid thead th.hot { background: linear-gradient(#fad9a0, #f0c067); color: #600060; }
.grid td { background: #fff; }
.grid .c { text-align: center; }
.grid .r { text-align: right; }
.grid .l { line-height: 14px; }
.grid .cur th, .grid .cur2 th { background: #ffd28a; color: #600060; }
.grid .cur td, .grid td.sel { background: #e0efff; }
.box { flex: 1; min-height: 0; overflow: hidden; background: #fff; border: 2px solid #a8a8a8; padding: 1px; margin-right: 1px; }
.midpane { display: grid; grid-template-rows: 458fr 285fr; min-height: 0; }
.stack { display: flex; flex-direction: column; min-height: 0; padding-bottom: 5px; }
.stack:last-child { padding-bottom: 0; }
.compbar { flex: none; display: flex; align-items: center; gap: 7px; height: 27px; margin-top: 1px; padding: 0 0 2px 4px; background: linear-gradient(#fbfcfe, #e2e7f5 36%, #ced6ea 38%, #dee5f5); }
.compbar button { gap: 3px; }
.find { flex: none; display: flex; align-items: center; height: 24px; border-bottom: 1px solid #b5b5b5; margin: 1px 1px 1px 0; background: #f7f9fc; }
.find input { flex: 1; min-width: 0; height: 22px; border: 1px solid #d6dbe5; background: #fff; padding: 0 2px 4px; }
.find input::placeholder { color: #777; }
.find button { padding: 0 6px 2px 7px; }
.comps td { padding-left: 20px; font: 10px/18px "DejaVu Sans Mono", monospace; }
.comps th:nth-child(1) { width: 25px; }
.comps th:nth-child(2) { width: 162px; }
.box.open { border-bottom: 0; margin-top: 2px; }
.props th:nth-child(1) { width: 83px; text-align: left; }
.props th:nth-child(2) { width: 64px; text-align: left; }
.props th:nth-child(3) { width: 31px; }
.props thead th:nth-child(3) { padding: 0 1px; }
.props td { height: 21px; }
.props td:first-child { padding-left: 20px; padding-right: 0; }
.props .blue td:first-child { color: #0000f0; }
.props .dim td { color: #808080; }
input[type=checkbox] {
  appearance: none; width: 13px; height: 13px; margin: 0; vertical-align: middle; border: 1px solid #8e8f8f; flex: none;
  background: linear-gradient(135deg, #cfd3d8, #f6f6f6); box-shadow: inset 0 0 0 1px #f4f4f4;
}
.mainpane { display: grid; grid-template-rows: 424fr 319fr; min-height: 0; padding-left: 2px; }
.upper, .lower { display: flex; flex-direction: column; min-height: 0; min-width: 0; }
.qtybar { flex: none; display: flex; height: 28px; background: #fff; border-top: 1px solid #8a8fa0; border-bottom: 1px solid #a8a8a8; }
.qtybar .bar { gap: 6px; padding: 0 4px 2px; border-bottom: 0; }
.qtybar .bar .car { margin-left: 3px; }
.sheet { flex: 1; min-height: 0; overflow: hidden; background: #fff; border: 1px solid #a0a0a0; border-top: 0; border-right: 0; padding-top: 1px; }
.items th:nth-child(1) { width: 20px; }
.items tbody th:nth-child(1) { text-align: left; }
.items th:nth-child(2) { width: 101px; }
.items th:nth-child(3) { width: 46px; }
.items th:nth-child(4) { width: 201px; }
.items th:nth-child(5) { width: 199px; }
.items th:nth-child(6) { width: 40px; }
.items th:nth-child(7) { width: 110px; }
.items th:nth-child(8) { width: 151px; }
.items th:nth-child(9) { width: 80px; }
.items th:nth-child(10) { width: 79px; }
.items th:nth-child(11) { width: 61px; }
.items th:nth-child(12) { width: 61px; }
.items .aqua td { background: #ccffff; }
.code { display: flex; align-items: center; gap: 5px; height: 18px; }
.elbow { width: 17px; height: 10px; align-self: flex-start; margin-left: 6px; border: 1px solid #aaa; border-top: 0; border-right: 0; }
.tabs { flex: none; display: flex; align-items: flex-end; height: 26px; border-top: 2px solid #a0a0a0; border-bottom: 1px solid #909090; }
.tabs button { height: 20px; padding: 0 3px; border: 1px solid #777; border-bottom: 0; }
.tabs .active { border-color: transparent; padding: 0 4px 0 1px; }
.lower .sheet { border-left-width: 2px; }
.match td { font: 10px/18px "DejaVu Sans Mono", monospace; }
.match .zh { font: 12px/14px "Noto Sans CJK SC", sans-serif; }
.match th:nth-child(1) { width: 51px; }
.match th:nth-child(2) { width: 81px; }
.match th:nth-child(3) { width: 203px; }
.match th:nth-child(4) { width: 81px; }
.match th:nth-child(5) { width: 81px; }

/* floating windows */
.win { position: absolute; border: 1px solid #5f6368; border-radius: 6px; padding: 0 6px 6px; display: flex; flex-direction: column; backdrop-filter: blur(3px); box-shadow: inset 0 0 0 1px #fff; }
.dialog { left: 562px; top: 323px; width: 578px; height: 438px; background: linear-gradient(160deg, rgba(255,255,255,.92), rgba(240,240,240,.92) 12%, rgba(255,255,255,.95) 13%, rgba(242,242,242,.85) 60%, rgba(235,255,255,.5)); }
.wtitle { flex: none; display: flex; align-items: center; gap: 5px; height: 29px; }
.wtitle .i16 { margin-left: 1px; }
.wtitle h2 { flex: 1; font-size: 12px; }
.wbtns { display: flex; align-self: flex-start; height: 19px; border: 1px solid #9a9da3; border-top: 0; border-radius: 0 0 4px 4px; }
.wbtns button { width: 28px; justify-content: center; border-right: 1px solid #a9acb2; }
.wbtns .big { width: 46px; border: 0; }
.g { width: 12px; height: 10px; }
.client { flex: 1; min-height: 0; display: flex; flex-direction: column; background: #f0f0f0; border: 1px solid #7d7d7d; }
.dialog .client { border-right: 3px solid #a0a0a0; border-bottom: 3px solid #a0a0a0; }
.dialog .body { flex: 1; padding: 0 7px 0 9px; }
.line { display: flex; align-items: center; justify-content: space-between; }
.head { height: 43px; padding: 6px 7px 0 2px; }
.line label, .foot label { display: flex; align-items: center; gap: 3px; }
.codes { display: flex; justify-content: space-between; height: 168px; overflow: hidden; background: #fff; border: 1px solid #a0a0a0; padding: 1px 2px 1px 1px; }
.codet { align-self: flex-start; }
.codet th:nth-child(1) { width: 21px; }
.codet th:nth-child(2) { width: 235px; }
.codet th:nth-child(3) { width: 136px; }
.codet tbody tr td { background: #00ffff; font: 10px/18px "DejaVu Sans Mono", monospace; }
.codet tbody tr td:nth-child(2) { padding-left: 20px; font: 12px/18px "Noto Sans CJK SC", sans-serif; }
.grid.codet tbody .cur td { background: #00ffff; }
.grid.codet tbody .cur td:nth-child(2) { background: #08f0ff; }
.sbar { display: flex; flex-direction: column; align-items: center; width: 16px; padding: 7px 0; background: #f0f0f0; color: #444; }
.ar { width: 7px; height: 4px; transform: rotate(180deg); }
.ar.dn { transform: none; }
.thumb { width: 15px; height: 68px; margin-top: 7px; border: 1px solid #979797; border-radius: 2px; background: repeating-linear-gradient(#777 0 1px, transparent 1px 2px) 3px 29px / 7px 7px no-repeat, linear-gradient(90deg, #f6f6f6, #d0d0d0); }
.fill { flex: 1; }
.flat { color: #888; background: #f4f4f4; }
.expr { height: 55px; padding: 6px 8px 0 6px; }
.btn { justify-content: center; width: 62px; height: 23px; border: 1px solid #707070; border-radius: 3px; background: linear-gradient(#f4f4f4, #ebebeb 48%, #dcdcdc 52%, #cfcfcf); box-shadow: inset 0 0 0 1px #fafafa; }
.btn.main { border: 2px solid #2cb4ea; background: linear-gradient(#eef8fd, #d5effc 48%, #bce5fa 52%, #b0ddf5); }
.btn.rules { width: 110px; gap: 8px; margin-left: auto; }
.area { display: flex; height: 45px; margin: 0 8px 0 6px; background: #fff; border: 1px solid #e0e3e8; border-top-color: #abadb3; }
.area textarea { flex: 1; border: 0; resize: none; padding: 2px; background: none; overflow: hidden; font: 10px/14px "DejaVu Sans Mono", monospace; outline: 0; }
.hint { padding: 6px 0 0 6px; line-height: 12px; white-space: nowrap; }
.foot { flex: none; display: flex; align-items: flex-end; gap: 8px; height: 41px; padding: 3px 7px 6px 15px; border-top: 1px solid #a0a0a0; }
.foot .rules { margin-right: 6px; }
.foot fieldset { display: flex; gap: 18px; align-items: flex-end; width: 128px; height: 31px; padding: 0 7px 1px; border: 1px solid #d5dfe5; border-radius: 3px; align-self: flex-start; }
input[type=radio] { appearance: none; width: 13px; height: 13px; margin: 0; border: 1px solid #8e8f8f; border-radius: 50%; background: radial-gradient(#ddd, #fff); }
input[type=radio]:checked { background: radial-gradient(circle at 45% 40%, #8fd8f5 1px, #14699b 3px, #0d3c5c 4px, #f4f4f4 5px); }
.msg { left: 845px; top: 452px; width: 228px; height: 185px; background: linear-gradient(90deg, rgba(240,250,250,.75), rgba(235,248,248,.8) 15%, rgba(235,248,248,.45) 30%, rgba(240,248,248,.25) 50%, rgba(245,245,245,.6) 60%, rgba(240,240,240,.8)); }
.msg .wtitle { height: 28px; }
.msg .client { background: #f0f0f0; border-color: #6d7072; }
.say { flex: 1; display: flex; align-items: center; gap: 8px; padding: 0 0 2px 25px; background: #fff; }
.act { display: flex; justify-content: flex-end; align-items: flex-start; height: 55px; padding: 12px 9px 0 0; }
.act .btn { width: 86px; height: 28px; }
```
